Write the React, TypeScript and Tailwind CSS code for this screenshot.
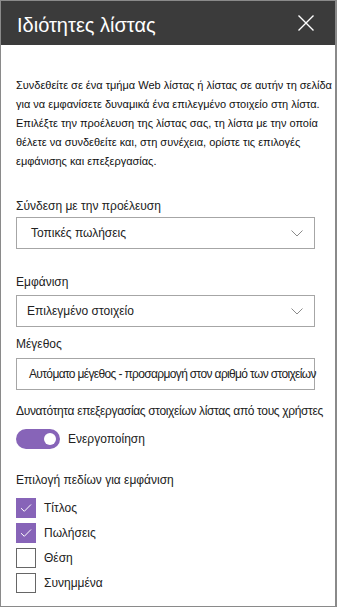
import React from "react";

const font = { fontFamily: '"Liberation Sans", Arial, sans-serif' };

function Chevron() {
  return (
    <svg width="12" height="7" viewBox="0 0 12 7" fill="none">
      <path d="M0.5 0.5 L6 6 L11.5 0.5" stroke="#8a8a8a" strokeWidth="1" />
    </svg>
  );
}

function Dropdown({ text, pl }: { text: string; pl: string }) {
  return (
    <div className={`h-[32px] w-[299px] border border-[#a6a6a6] flex items-center justify-between ${pl} pr-[11px]`}>
      <span className="text-[12px] text-[#222] whitespace-nowrap">{text}</span>
      <Chevron />
    </div>
  );
}

function Check({ checked, label }: { checked: boolean; label: string }) {
  return (
    <div className="flex items-center h-[20px]">
      {checked ? (
        <div className="w-[20px] h-[20px] bg-[#8764b8] flex items-center justify-center">
          <svg width="12" height="10" viewBox="0 0 12 10" fill="none">
            <path d="M1 5.2 L4.3 8.3 L11 1.5" stroke="#ffffff" strokeWidth="1" />
          </svg>
        </div>
      ) : (
        <div className="w-[20px] h-[20px] border border-[#666666] bg-white" />
      )}
      <span className="ml-[8px] text-[12px] text-[#222] leading-[20px]">{label}</span>
    </div>
  );
}

export default function App() {
  return (
    <div className="w-[337px] h-[608px] bg-white" style={font}>
      <div className="h-[607px] border-t border-l border-b border-r-2 border-[#8a8a8a] flex flex-col">
        <div className="h-[44px] bg-[#3b3b3b] flex items-center justify-between pl-[16px] pr-[21px] shrink-0">
          <span className="text-[20px] text-white leading-[24px] pt-[3px]">Ιδιότητες λίστας</span>
          <svg width="16" height="16" viewBox="0 0 16 16" fill="none">
            <path d="M0.5 0.5 L15.5 15.5 M15.5 0.5 L0.5 15.5" stroke="#ffffff" strokeWidth="1.4" />
          </svg>
        </div>
        <div className="pl-[15px] flex flex-col">
          <div className="mt-[31px] text-[11px] leading-[19px] text-[#111] whitespace-nowrap">
            <div>Συνδεθείτε σε ένα τμήμα Web λίστας ή λίστας σε αυτήν τη σελίδα</div>
            <div>για να εμφανίσετε δυναμικά ένα επιλεγμένο στοιχείο στη λίστα.</div>
            <div>Επιλέξτε την προέλευση της λίστας σας, τη λίστα με την οποία</div>
            <div>θέλετε να συνδεθείτε και, στη συνέχεια, ορίστε τις επιλογές</div>
            <div>εμφάνισης και επεξεργασίας.</div>
          </div>
          <div className="mt-[26px] text-[12px] leading-[18px] text-[#222]">Σύνδεση με την προέλευση</div>
          <div className="mt-[2px]">
            <Dropdown text="Τοπικές πωλήσεις" pl="pl-[14px]" />
          </div>
          <div className="mt-[24px] text-[12px] leading-[18px] text-[#222]">Εμφάνιση</div>
          <div className="mt-[4px]">
            <Dropdown text="Επιλεγμένο στοιχείο" pl="pl-[10px]" />
          </div>
          <div className="mt-[8px] text-[12px] leading-[18px] text-[#222]">Μέγεθος</div>
          <div className="mt-[5px]">
            <div className="h-[32px] w-[299px] border border-[#a6a6a6] flex items-center pl-[12px]">
              <span className="text-[12px] text-[#222] whitespace-nowrap tracking-[-0.65px]">Αυτόματο μέγεθος - προσαρμογή στον αριθμό των στοιχείων</span>
            </div>
          </div>
          <div className="mt-[12px] text-[12px] leading-[18px] text-[#222] whitespace-nowrap tracking-[-0.35px]">Δυνατότητα επεξεργασίας στοιχείων λίστας από τους χρήστες</div>
          <div className="mt-[9px] flex items-center h-[20px]">
            <div className="w-[44px] h-[20px] rounded-full bg-[#8764b8] flex items-center justify-end pr-[4px]">
              <div className="w-[12px] h-[12px] rounded-full bg-white" />
            </div>
            <span className="ml-[8px] text-[12px] text-[#222]">Ενεργοποίηση</span>
          </div>
          <div className="mt-[22px] text-[12px] leading-[18px] text-[#222]">Επιλογή πεδίων για εμφάνιση</div>
          <div className="mt-[9px] flex flex-col gap-[5px]">
            <Check checked label="Τίτλος" />
            <Check checked label="Πωλήσεις" />
            <Check checked={false} label="Θέση" />
            <Check checked={false} label="Συνημμένα" />
          </div>
        </div>
      </div>
    </div>
  );
}
